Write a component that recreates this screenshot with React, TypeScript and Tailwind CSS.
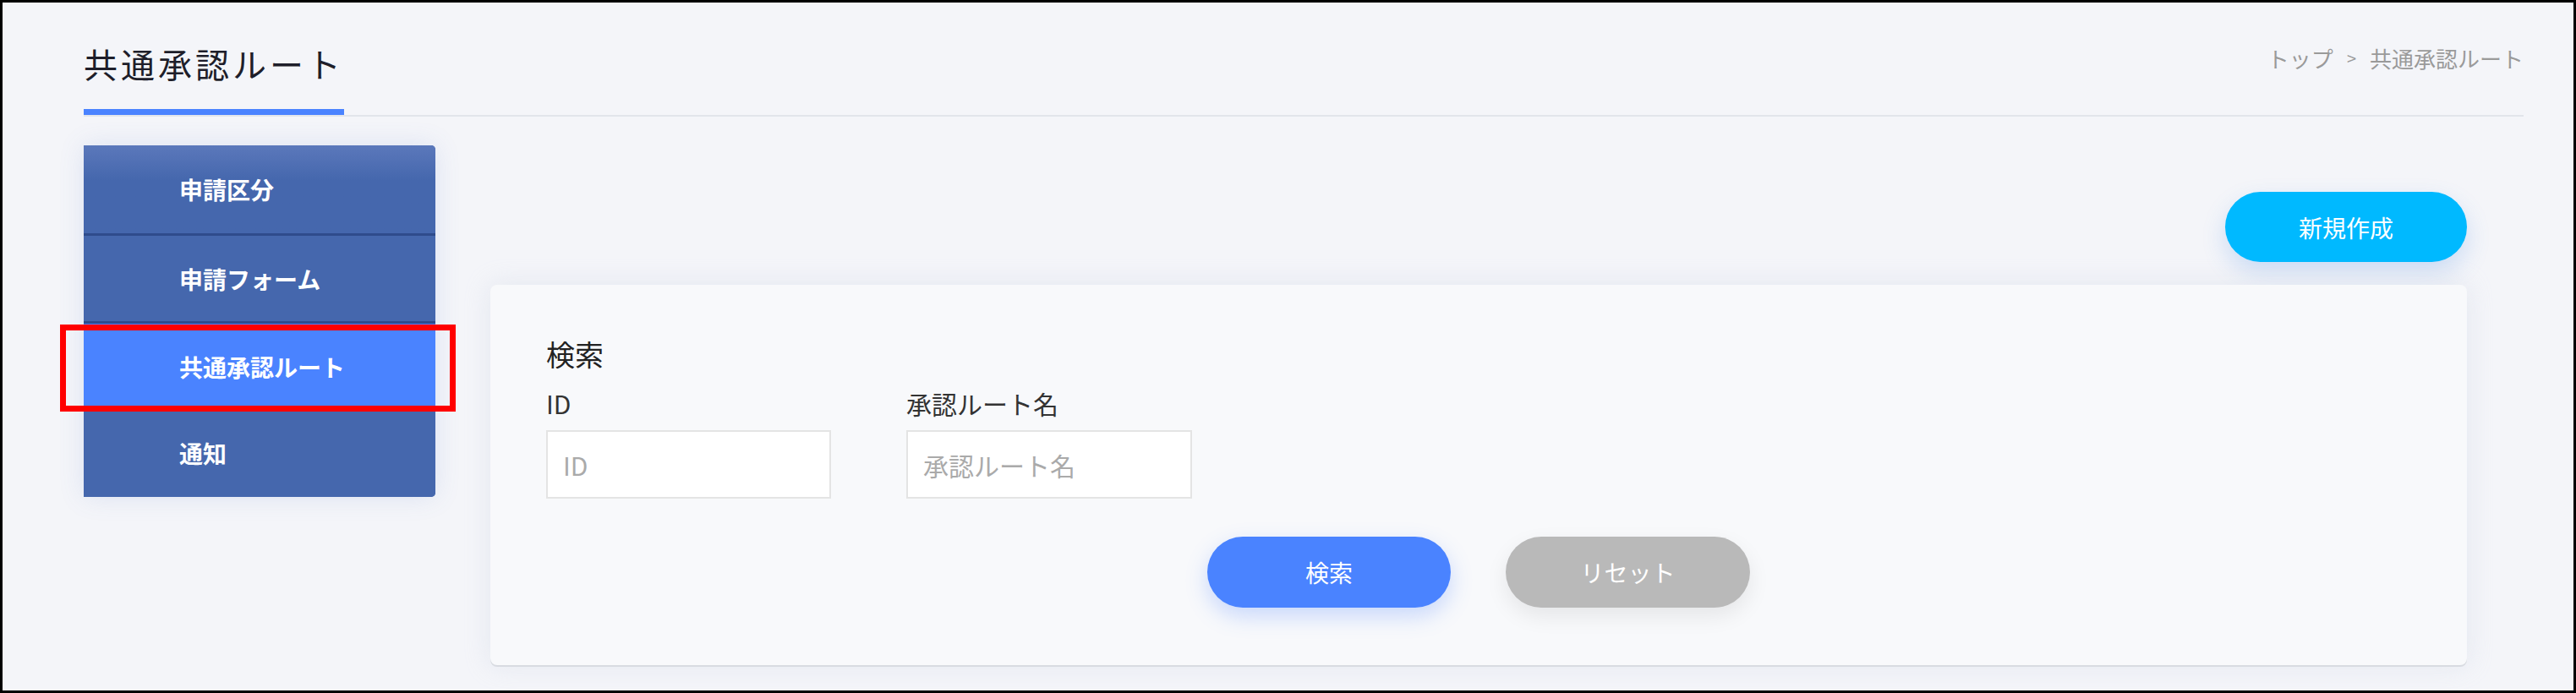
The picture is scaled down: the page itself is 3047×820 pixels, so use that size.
const MENU = [
  { label: "申請区分", active: false },
  { label: "申請フォーム", active: false },
  { label: "共通承認ルート", active: true },
  { label: "通知", active: false },
];

export default function App() {
  return (
    <div className="w-[3047px] h-[820px] overflow-hidden border-[3px] border-black bg-[#f4f5f9] text-[#222] font-['Noto_Sans_CJK_JP','Noto_Sans',sans-serif]">
      {/* Header */}
      <div className="ml-[96px] mr-[59px] pt-[48px] flex justify-between items-start border-b-2 border-[#e2e5eb]">
        <div className="w-[308px] pb-[30px] border-b-[7px] border-[#4a83ff]">
          <h1 className="text-[40px] leading-[48px] tracking-[4px] font-normal text-[#1e1e2a]">
            共通承認ルート
          </h1>
        </div>
        <div className="mt-[2px] flex items-center text-[26px] leading-[31px] text-[#9a9a9a]">
          <span>トップ</span>
          <span className="mx-[16px] text-[20px]">&gt;</span>
          <span>共通承認ルート</span>
        </div>
      </div>

      {/* Body */}
      <div className="flex items-start pl-[96px] pr-[126px] pt-[34px]">
        {/* Side menu */}
        <div className="relative w-[416px] shrink-0 rounded-r-[5px] bg-[#4567ad] shadow-[0_0_30px_rgba(90,120,200,0.15)]">
          {MENU.map((item, i) => (
            <div
              key={item.label}
              className={
                "h-[104px] flex items-center pl-[113px] text-[28px] font-bold text-white " +
                (item.active
                  ? "bg-[#4a83ff]"
                  : i === 0
                  ? "bg-gradient-to-b from-[#5b78bb] to-[#4567ad] to-40% rounded-tr-[5px]"
                  : "bg-[#4567ad]") +
                (i === 1 || i === 2 ? " border-t-[3px] border-[#2f4c8c]" : "") +
                (i === 3 ? " rounded-br-[5px] h-[103px]" : "")
              }
            >
              {item.label}
            </div>
          ))}
          {/* red annotation */}
          <div className="absolute left-[-28px] top-[212px] w-[468px] h-[103px] border-[7px] border-[#ff0000]" />
        </div>

        {/* Content */}
        <div className="flex-1 ml-[65px] flex flex-col items-end">
          <button className="mt-[55px] w-[286px] h-[83px] rounded-full bg-[#00b9ff] text-white text-[28px] shadow-[0_12px_28px_rgba(60,130,230,0.22)]">
            新規作成
          </button>

          <div className="mt-[27px] w-full rounded-[8px] bg-[#f8f9fb] pt-[61px] pb-[68px] pl-[66px] pr-[66px] shadow-[0_2px_0_#d8dbe1,0_0_30px_rgba(190,200,220,0.3)]">
            <div className="text-[34px] leading-[41px] text-[#222]">検索</div>

            <div className="mt-[20px] flex gap-[89px]">
              <div className="flex flex-col">
                <label className="text-[30px] leading-[36px] text-[#333]">ID</label>
                <input
                  readOnly
                  placeholder="ID"
                  className="mt-[14px] w-[337px] h-[81px] border-2 border-[#e4e4e4] bg-white px-[18px] text-[30px] outline-none placeholder:text-[#aaa]"
                />
              </div>
              <div className="flex flex-col">
                <label className="text-[30px] leading-[36px] text-[#333]">承認ルート名</label>
                <input
                  readOnly
                  placeholder="承認ルート名"
                  className="mt-[14px] w-[338px] h-[81px] border-2 border-[#e4e4e4] bg-white px-[18px] text-[30px] outline-none placeholder:text-[#aaa]"
                />
              </div>
            </div>

            <div className="mt-[45px] -ml-[66px] -mr-[66px] flex justify-center gap-[65px]">
              <button className="w-[288px] h-[84px] rounded-full bg-[#4a83ff] text-white text-[28px] shadow-[0_10px_26px_rgba(74,131,255,0.28)]">
                検索
              </button>
              <button className="w-[289px] h-[84px] rounded-full bg-[#b9b9b9] text-white text-[28px] shadow-[0_10px_26px_rgba(0,0,0,0.08)]">
                リセット
              </button>
            </div>
          </div>
        </div>
      </div>
    </div>
  );
}
